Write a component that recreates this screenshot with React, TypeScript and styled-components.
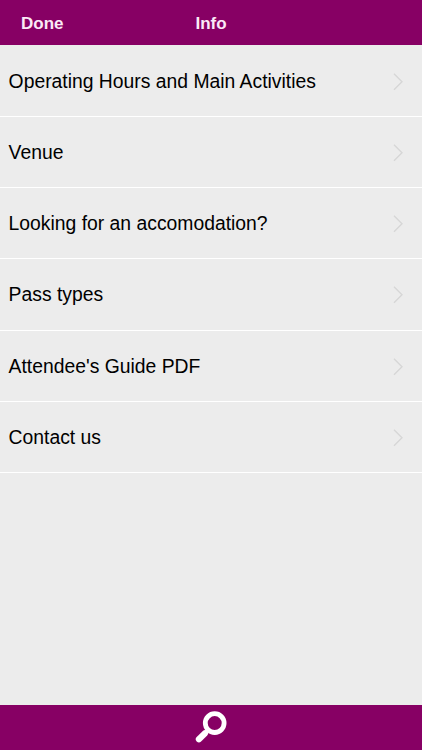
import React from "react";
import styled, { createGlobalStyle } from "styled-components";

const Global = createGlobalStyle`
  *{box-sizing:border-box}
  body{margin:0;font-family:"Liberation Sans",Arial,sans-serif;background:#ececec}
`;
const Screen = styled.div`
  display:flex;flex-direction:column;height:750px;background:#ececec;
`;
const Header = styled.header`
  display:grid;grid-template-columns:1fr auto 1fr;align-items:center;
  height:45px;flex:none;padding:2px 21px 0;background:#870064;color:#fbeaf7;
`;
const Done = styled.button`
  justify-self:start;border:0;padding:0;background:none;color:inherit;
  font:bold 17px/20px "Liberation Sans",Arial,sans-serif;
`;
const Title = styled.h1`
  margin:0;font:bold 17px/20px "Liberation Sans",Arial,sans-serif;
`;
const List = styled.ul`
  list-style:none;margin:0;padding:0.4px 0 0;flex:1;
`;
const Row = styled.li`
  display:flex;align-items:center;justify-content:space-between;
  height:71.3px;padding:2px 18px 0 8.6px;border-bottom:1px solid #fff;
`;
const Label = styled.span`
  font-size:19.33px;line-height:24px;color:#000;white-space:nowrap;
`;
const Footer = styled.footer`
  display:flex;justify-content:center;height:45px;flex:none;background:#870064;
`;

const rows = [
  "Operating Hours and Main Activities",
  "Venue",
  "Looking for an accomodation?",
  "Pass types",
  "Attendee's Guide PDF",
  "Contact us",
];

const Chevron = () => (
  <svg width="11" height="18" viewBox="0 0 11 18" fill="none" stroke="#d6d6d6" strokeWidth="1.3">
    <path d="M1 .7L9 8.7L1 16.7" />
  </svg>
);

const SearchIcon = () => (
  <svg width="34" height="45" viewBox="0 0 34 45" fill="none" stroke="#fff">
    <circle cx="20.7" cy="18.1" r="9.4" strokeWidth="4.8" />
    <path d="M14 25L11 28" strokeWidth="3.8" />
    <path d="M11 28.2L4.9 34.3" strokeWidth="6.2" strokeLinecap="round" />
  </svg>
);

export default function App() {
  return (
    <Screen>
      <Global />
      <Header><Done>Done</Done><Title>Info</Title></Header>
      <List>
        {rows.map((text) => (
          <Row key={text}>
            <Label>{text}</Label>
            <Chevron />
          </Row>
        ))}
      </List>
      <Footer><SearchIcon /></Footer>
    </Screen>
  );
}
